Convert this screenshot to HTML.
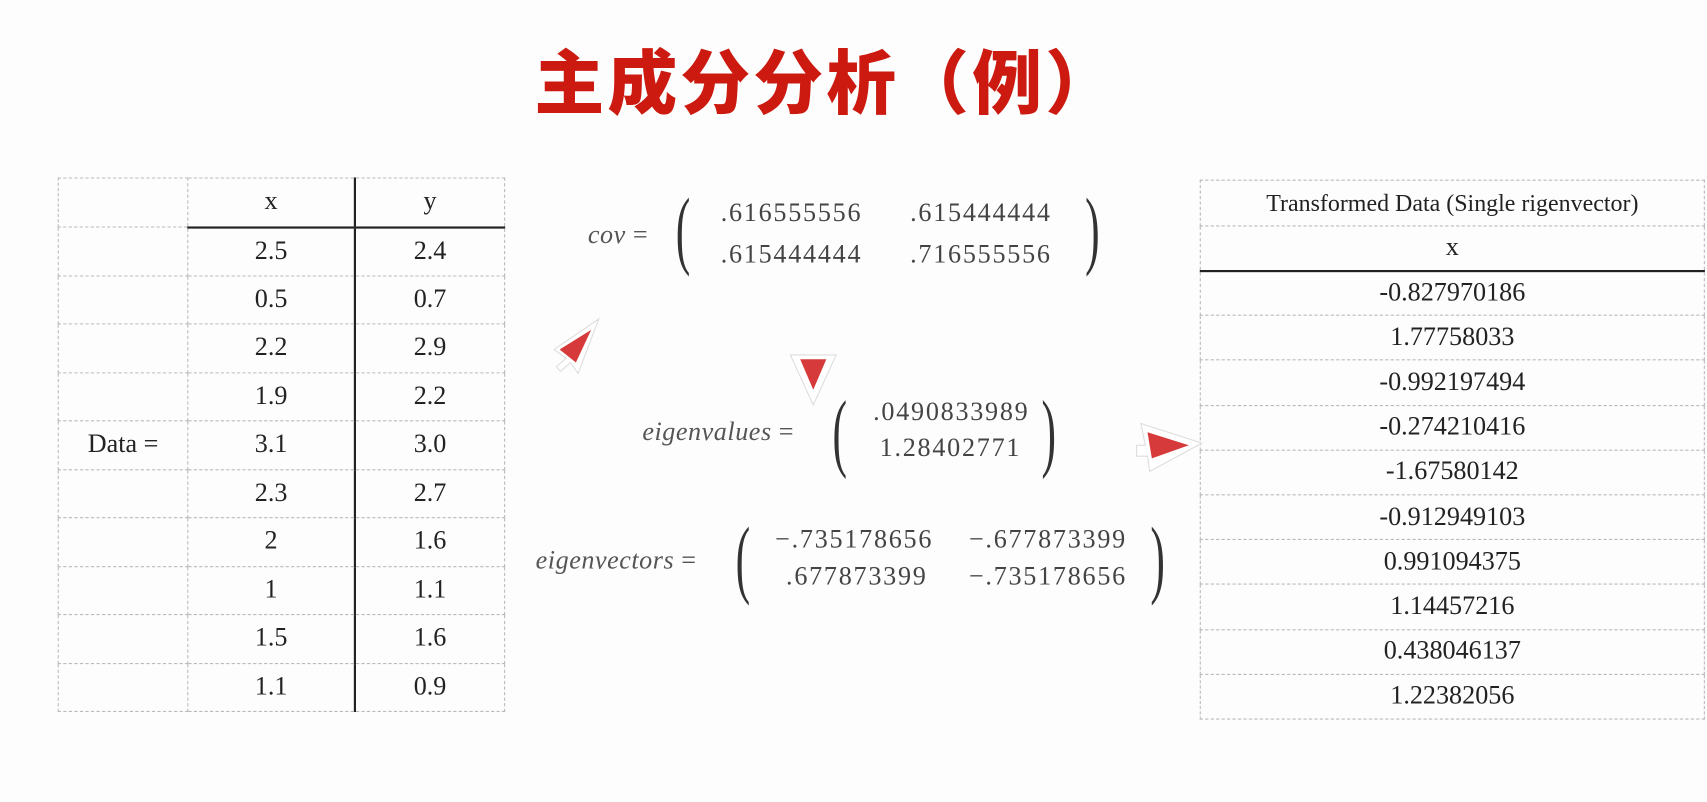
<!DOCTYPE html>
<html><head><meta charset="utf-8"><style>
html,body{margin:0;padding:0;background:#fdfdfd;width:1707px;height:802px;overflow:hidden}
#w{position:absolute;left:0;top:0;width:1568px;height:736px;transform:scale(1.0887);transform-origin:0 0;font-family:"Liberation Serif",serif;color:#222}
.a{position:absolute}
.title{left:0;width:1518px;top:26px;text-align:center;font:900 64px "Noto Sans CJK SC","WenQuanYi Zen Hei",sans-serif;color:#cc1a10;letter-spacing:3px}
table{border-collapse:collapse;position:absolute}
td{border:1px dashed #bbb;text-align:center;padding:0;font-size:24px}
.m{font-size:24px;color:#444;white-space:nowrap;letter-spacing:1.6px}
.i{font-style:italic;color:#555;letter-spacing:0.5px}
.p{font-size:80px;color:#333;font-weight:100;transform:scaleX(0.5)}
</style></head><body><div id="w">
<div class="a title">主成分分析（例）</div>

<table style="left:53px;top:163px;width:411px">
<tr style="height:45px"><td style="width:118px"></td><td style="width:152px;border-bottom:2px solid #222">x</td><td style="border-left:2px solid #222;border-bottom:2px solid #222">y</td></tr>
<tr style="height:44.5px"><td></td><td>2.5</td><td style="border-left:2px solid #222">2.4</td></tr>
<tr style="height:44.5px"><td></td><td>0.5</td><td style="border-left:2px solid #222">0.7</td></tr>
<tr style="height:44.5px"><td></td><td>2.2</td><td style="border-left:2px solid #222">2.9</td></tr>
<tr style="height:44.5px"><td></td><td>1.9</td><td style="border-left:2px solid #222">2.2</td></tr>
<tr style="height:44.5px"><td>Data =</td><td>3.1</td><td style="border-left:2px solid #222">3.0</td></tr>
<tr style="height:44.5px"><td></td><td>2.3</td><td style="border-left:2px solid #222">2.7</td></tr>
<tr style="height:44.5px"><td></td><td>2</td><td style="border-left:2px solid #222">1.6</td></tr>
<tr style="height:44.5px"><td></td><td>1</td><td style="border-left:2px solid #222">1.1</td></tr>
<tr style="height:44.5px"><td></td><td>1.5</td><td style="border-left:2px solid #222">1.6</td></tr>
<tr style="height:44.5px"><td></td><td>1.1</td><td style="border-left:2px solid #222">0.9</td></tr>
</table>

<table style="left:1102px;top:165px;width:464px">
<tr style="height:42px"><td style="font-size:22px">Transformed Data (Single rigenvector)</td></tr>
<tr style="height:41px"><td style="border-bottom:2px solid #222">x</td></tr>
<tr style="height:41.2px"><td>-0.827970186</td></tr>
<tr style="height:41.2px"><td>1.77758033</td></tr>
<tr style="height:41.2px"><td>-0.992197494</td></tr>
<tr style="height:41.2px"><td>-0.274210416</td></tr>
<tr style="height:41.2px"><td>-1.67580142</td></tr>
<tr style="height:41.2px"><td>-0.912949103</td></tr>
<tr style="height:41.2px"><td>0.991094375</td></tr>
<tr style="height:41.2px"><td>1.14457216</td></tr>
<tr style="height:41.2px"><td>0.438046137</td></tr>
<tr style="height:41.2px"><td>1.22382056</td></tr>
</table>

<div class="a m i" style="left:540px;top:203px">cov <span style="font-style:normal">=</span></div>
<div class="a p" style="left:614px;top:166px">(</div>
<div class="a p" style="left:990px;top:166px">)</div>
<div class="a m" style="left:662px;top:183px">.616555556</div>
<div class="a m" style="left:836px;top:183px">.615444444</div>
<div class="a m" style="left:662px;top:221px">.615444444</div>
<div class="a m" style="left:836px;top:221px">.716555556</div>

<div class="a m i" style="left:590px;top:384px">eigenvalues <span style="font-style:normal">=</span></div>
<div class="a p" style="left:758px;top:352px">(</div>
<div class="a p" style="left:950px;top:352px">)</div>
<div class="a m" style="left:802px;top:366px">.0490833989</div>
<div class="a m" style="left:808px;top:399px">1.28402771</div>

<div class="a m i" style="left:492px;top:502px">eigenvectors <span style="font-style:normal">=</span></div>
<div class="a p" style="left:669px;top:468px">(</div>
<div class="a p" style="left:1050px;top:468px">)</div>
<div class="a m" style="left:712px;top:483px">&minus;.735178656</div>
<div class="a m" style="left:890px;top:483px">&minus;.677873399</div>
<div class="a m" style="left:722px;top:517px">.677873399</div>
<div class="a m" style="left:890px;top:517px">&minus;.735178656</div>

<svg class="a" style="left:495px;top:285px" width="70" height="70">
<polygon points="55,8 36,58 29,48 20,56 16,52 25,44 14,36" fill="#fff" stroke="#ddd" stroke-width="1"/>
<polygon points="48,18 34,48 19,36" fill="#d63a3a"/>
</svg>
<svg class="a" style="left:722px;top:318px" width="50" height="55">
<polygon points="4,8 46,8 25,54" fill="#fff" stroke="#ddd"/>
<polygon points="13,12 37,12 25,40" fill="#d63a3a"/>
</svg>
<svg class="a" style="left:1040px;top:385px" width="68" height="50">
<polygon points="8,4 64,22 16,48 14,34 4,34 4,24 12,24" fill="#fff" stroke="#ddd"/>
<polygon points="14,12 52,24 18,36" fill="#d63a3a"/>
</svg>
</div></body></html>
